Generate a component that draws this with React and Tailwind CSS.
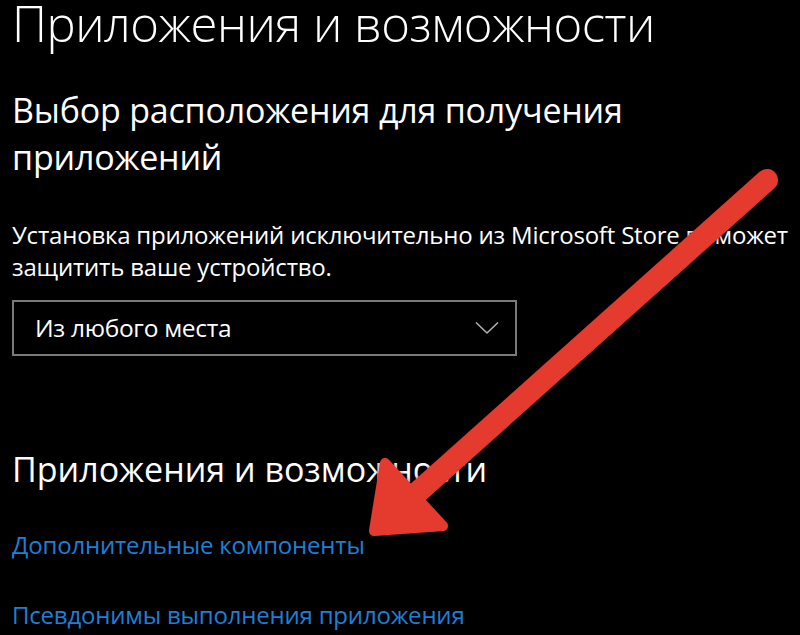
import React from "react";

export default function App() {
  const font = { fontFamily: '"Open Sans", "Noto Sans", sans-serif' };
  return (
    <div className="relative w-[800px] h-[635px] bg-black overflow-hidden text-white" style={font}>
      <div className="flex flex-col pl-[12px]">
        <h1 className="text-[49px] font-light leading-[46px] tracking-[-0.5px] whitespace-nowrap">Приложения и возможности</h1>
        <h2 className="text-[34px] font-normal leading-[47px] mt-[41px] w-[660px] tracking-[-0.2px]">
          Выбор расположения для получения приложений
        </h2>
        <p className="text-[24px] leading-[32px] mt-[38px] w-[790px] tracking-[-0.2px]">
          Установка приложений исключительно из Microsoft Store поможет защитить ваше устройство.
        </p>
        <div className="mt-[17px] w-[505px] h-[56px] border-2 border-[#7a7a7a] flex items-center justify-between pl-[21px] pr-[16px]">
          <span className="text-[24.5px] tracking-[-0.3px]">Из любого места</span>
          <svg width="24" height="14" viewBox="0 0 24 14" fill="none">
            <path d="M1 1.5 L12 12 L23 1.5" stroke="#b0b0b0" strokeWidth="1.6" />
          </svg>
        </div>
        <h2 className="text-[34px] leading-[47px] mt-[90px] tracking-[0px]">Приложения и возможности</h2>
        <a className="text-[24px] leading-[30px] text-[#1e7fd6] mt-[37px] tracking-[-0.2px]">Дополнительные компоненты</a>
        <a className="text-[24px] leading-[30px] text-[#1e7fd6] mt-[40px] tracking-[-0.2px]">Псевдонимы выполнения приложения</a>
      </div>
      <svg className="absolute inset-0 pointer-events-none" width="800" height="635" viewBox="0 0 800 635">
        <defs>
          <filter id="sh" x="-20%" y="-20%" width="140%" height="140%">
            <feDropShadow dx="0" dy="0" stdDeviation="2" floodColor="#000" floodOpacity="0.6" />
          </filter>
        </defs>
        <g filter="url(#sh)">
          <line x1="767" y1="180" x2="418" y2="492" stroke="#e53a2f" strokeWidth="22" strokeLinecap="round" />
          <polygon points="374,531 385,463 443,526" fill="#e53a2f" stroke="#e53a2f" strokeWidth="10" strokeLinejoin="round" />
        </g>
      </svg>
    </div>
  );
}
